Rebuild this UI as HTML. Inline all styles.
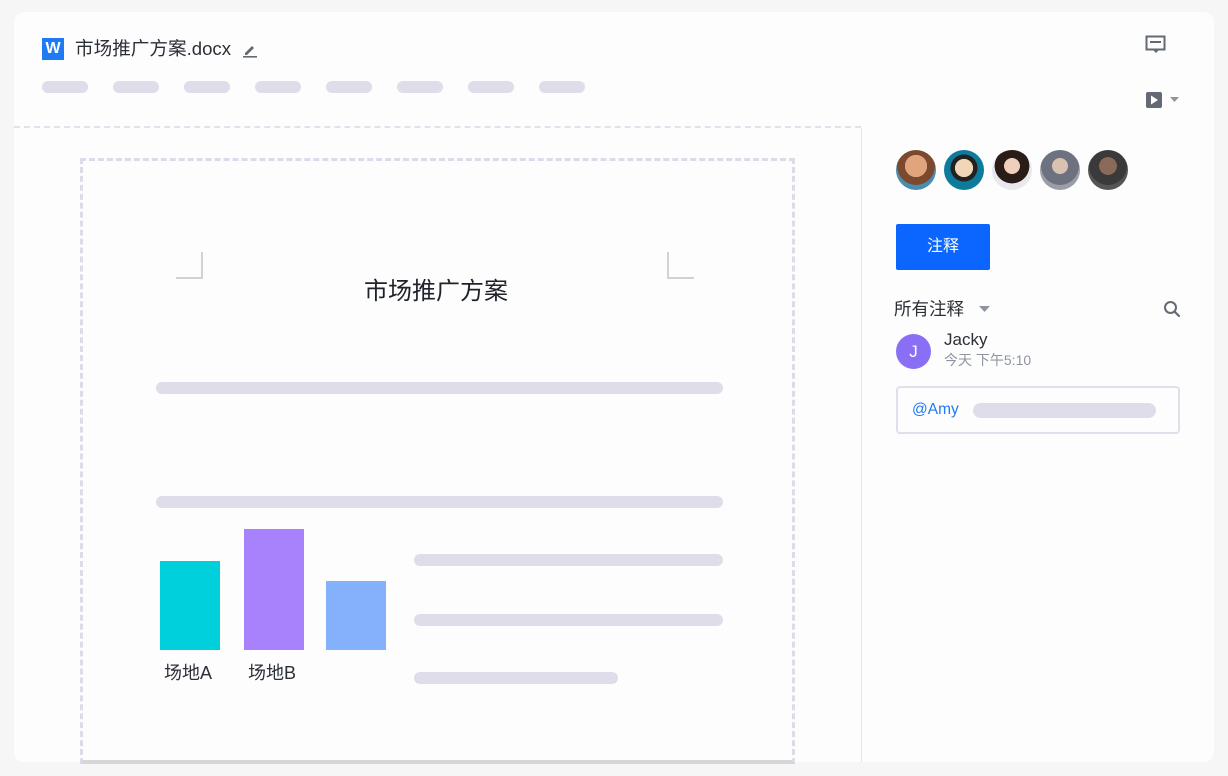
<!DOCTYPE html>
<html><head><meta charset="utf-8"><style>
*{margin:0;padding:0;box-sizing:border-box}
body{width:1228px;height:776px;background:#f6f6f7;position:relative;overflow:hidden;font-family:"Liberation Sans","Noto Sans CJK SC",sans-serif;color:#1f2329}
.card{position:absolute;left:14px;top:12px;width:1200px;height:750px;background:#fdfdfe;border-radius:10px}
.a{position:absolute}
.pill{position:absolute;height:12px;border-radius:6px;background:#dedde9}
.bar{position:absolute;height:12px;border-radius:6px;background:#dedde9}
</style></head><body>
<div class="card"></div>
<div class="a" style="left:42px;top:38px;width:22px;height:22px;background:#1f7af6;color:#fff;font-weight:bold;font-size:16px;text-align:center;line-height:22px">W</div>
<div class="a" style="left:75px;top:37px;font-size:18.6px;line-height:24px;color:#2b2f36">市场推广方案.docx</div>
<svg class="a" style="left:242px;top:42px" width="16" height="16" viewBox="0 0 16 16"><path d="M3 11 L10 4 L12 6 L5 13 L3 13Z" fill="#646a73"/><rect x="1" y="14" width="14" height="1.6" fill="#646a73"/></svg>
<div class="pill" style="left:42px;top:81px;width:46px"></div>
<div class="pill" style="left:113px;top:81px;width:46px"></div>
<div class="pill" style="left:184px;top:81px;width:46px"></div>
<div class="pill" style="left:255px;top:81px;width:46px"></div>
<div class="pill" style="left:326px;top:81px;width:46px"></div>
<div class="pill" style="left:397px;top:81px;width:46px"></div>
<div class="pill" style="left:468px;top:81px;width:46px"></div>
<div class="pill" style="left:539px;top:81px;width:46px"></div>
<svg class="a" style="left:1145px;top:35px" width="22" height="20" viewBox="0 0 22 20"><rect x="1.5" y="1.5" width="18" height="13" fill="none" stroke="#646a73" stroke-width="2"/><rect x="5" y="6" width="11" height="2" fill="#646a73"/><path d="M8 15 L11 18 L14 15Z" fill="#646a73"/></svg>
<svg class="a" style="left:1145px;top:91px" width="40" height="18" viewBox="0 0 40 18"><rect x="1" y="1" width="16" height="16" rx="2" fill="#646a73"/><path d="M6 4.5 L13 9 L6 13.5Z" fill="#fff"/><path d="M25 6 L34 6 L29.5 11Z" fill="#8f959e"/></svg>
<div class="a" style="left:14px;top:126px;width:847px;border-top:2px dashed #e3e2ec"></div>
<div class="a" style="left:861px;top:128px;width:1px;height:634px;background:#e6e6ea"></div>
<div class="a" style="left:80px;top:158px;width:715px;height:606px;border:3px dashed #dcdbe8;border-bottom:4px solid #d6d6d8;background:#fdfdfe"></div>
<div class="a" style="left:176px;top:252px;width:27px;height:27px;border-right:2px solid #d0d2d6;border-bottom:2px solid #d0d2d6"></div>
<div class="a" style="left:667px;top:252px;width:27px;height:27px;border-left:2px solid #d0d2d6;border-bottom:2px solid #d0d2d6"></div>
<div class="a" style="left:364px;top:277px;font-size:24px;line-height:30px;color:#1f2329">市场推广方案</div>
<div class="bar" style="left:156px;top:382px;width:567px"></div>
<div class="bar" style="left:156px;top:496px;width:567px"></div>
<div class="bar" style="left:414px;top:554px;width:309px"></div>
<div class="bar" style="left:414px;top:614px;width:309px"></div>
<div class="bar" style="left:414px;top:672px;width:204px"></div>
<div class="a" style="left:160px;top:561px;width:60px;height:89px;background:#00d0dc"></div>
<div class="a" style="left:244px;top:529px;width:60px;height:121px;background:#a881fd"></div>
<div class="a" style="left:326px;top:581px;width:60px;height:69px;background:#85b0fb"></div>
<div class="a" style="left:164px;top:660px;font-size:18px;line-height:26px;color:#2b2f36">场地A</div>
<div class="a" style="left:248px;top:660px;font-size:18px;line-height:26px;color:#2b2f36">场地B</div>
<div class="a" style="left:896px;top:150px;width:40px;height:40px;border-radius:50%;background:radial-gradient(circle at 50% 40%,#e0a57c 0 35%,#7b4a2e 36% 60%,#4a8db0 61%)"></div>
<div class="a" style="left:944px;top:150px;width:40px;height:40px;border-radius:50%;background:radial-gradient(circle at 50% 45%,#f2d6b8 0 30%,#222 31% 45%,#0d7b9c 46%)"></div>
<div class="a" style="left:992px;top:150px;width:40px;height:40px;border-radius:50%;background:radial-gradient(circle at 50% 40%,#f0d0bc 0 25%,#2a1c16 26% 55%,#e8e8ee 56%)"></div>
<div class="a" style="left:1040px;top:150px;width:40px;height:40px;border-radius:50%;background:radial-gradient(circle at 50% 40%,#d8c2b0 0 25%,#6e7280 26% 60%,#9a9ea8 61%)"></div>
<div class="a" style="left:1088px;top:150px;width:40px;height:40px;border-radius:50%;background:radial-gradient(circle at 50% 40%,#8a6a58 0 28%,#3a3a3a 29% 60%,#555 61%)"></div>
<div class="a" style="left:896px;top:224px;width:94px;height:46px;background:#0b66ff;border-radius:2px;color:#fff;font-size:16px;line-height:46px;text-align:center">注释</div>
<div class="a" style="left:894px;top:297px;font-size:17.5px;line-height:24px;color:#2b2f36">所有注释</div>
<svg class="a" style="left:979px;top:305px" width="12" height="8"><path d="M0 1 L11 1 L5.5 7Z" fill="#8f959e"/></svg>
<svg class="a" style="left:1163px;top:300px" width="18" height="18" viewBox="0 0 18 18"><circle cx="7.5" cy="7.5" r="5.5" fill="none" stroke="#646a73" stroke-width="2"/><path d="M11.5 11.5 L16 16" stroke="#646a73" stroke-width="2.2" stroke-linecap="round"/></svg>
<div class="a" style="left:896px;top:334px;width:35px;height:35px;border-radius:50%;background:#8a6ef6;color:#fff;font-size:17px;line-height:35px;text-align:center">J</div>
<div class="a" style="left:944px;top:329px;font-size:17px;line-height:22px;color:#2b2f36">Jacky</div>
<div class="a" style="left:944px;top:351px;font-size:14px;line-height:19px;color:#8f959e">今天 下午5:10</div>
<div class="a" style="left:896px;top:386px;width:284px;height:48px;border:2px solid #e0e0ea;border-radius:4px"></div>
<div class="a" style="left:912px;top:400px;font-size:15.5px;line-height:20px;color:#1f7af6">@Amy</div>
<div class="bar" style="left:973px;top:403px;width:183px;height:15px;border-radius:8px"></div>
</body></html>
